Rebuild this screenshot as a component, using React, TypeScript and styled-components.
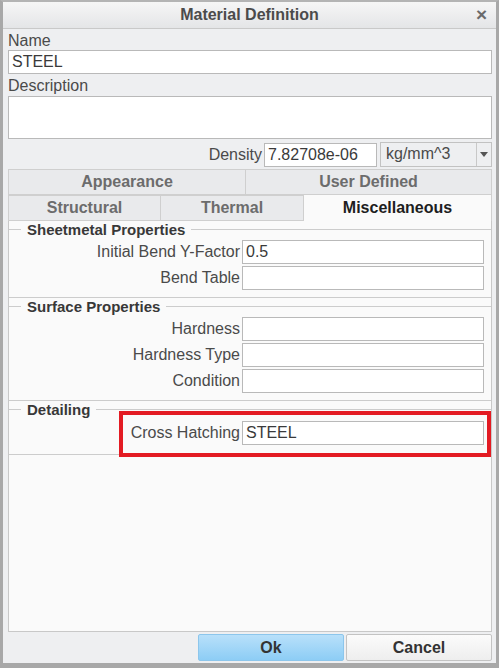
import React from "react"
import styled, { createGlobalStyle } from "styled-components"

const Global = createGlobalStyle`
  html, body { margin: 0; padding: 0; background: #ffffff; }
  body { font-family: "Liberation Sans", Arial, sans-serif; }
`

function Field({ label, value }: { label: string; value?: string }) {
  return (
    <FieldRow>
      <FieldLabel>{label}</FieldLabel>
      <Input>{value}</Input>
    </FieldRow>
  )
}

function App() {
  return (
    <Window>
      <Global />
      <TitleBar>
        <Title>Material Definition</Title>
        <Close>×</Close>
      </TitleBar>
      <Body>
        <Label>Name</Label>
        <Input $block>STEEL</Input>
        <Label>Description</Label>
        <TextArea />
        <DensityRow>
          <DensityLabel>Density</DensityLabel>
          <Input $width={113}>7.82708e-06</Input>
          <Select>
            <SelectText>kg/mm^3</SelectText>
            <SelectArrow>
              <svg width="8" height="5" viewBox="0 0 8 5">
                <path d="M0 0 L8 0 L4 5 Z" fill="#555" />
              </svg>
            </SelectArrow>
          </Select>
        </DensityRow>
        <Tabs>
          <TabRow>
            <Tab $w={238}>Appearance</Tab>
            <Tab $grow>User Defined</Tab>
          </TabRow>
          <TabRow>
            <Tab $w={153}>Structural</Tab>
            <Tab $w={144}>Thermal</Tab>
            <Tab $grow $active>Miscellaneous</Tab>
          </TabRow>
          <Panel>
            <Group>
              <GroupTitle>Sheetmetal Properties</GroupTitle>
              <Field label="Initial Bend Y-Factor" value="0.5" />
              <Field label="Bend Table" />
            </Group>
            <Group>
              <GroupTitle>Surface Properties</GroupTitle>
              <Field label="Hardness" />
              <Field label="Hardness Type" />
              <Field label="Condition" />
            </Group>
            <Group>
              <GroupTitle>Detailing</GroupTitle>
              <Highlight>
                <Field label="Cross Hatching" value="STEEL" />
              </Highlight>
            </Group>
          </Panel>
        </Tabs>
        <ButtonBar>
          <Button $primary>Ok</Button>
          <Button>Cancel</Button>
        </ButtonBar>
      </Body>
    </Window>
  )
}

export default App

const Window = styled.div`
  width: 499px;
  height: 668px;
  box-sizing: border-box;
  border: 3px solid #a8a8a8;
  border-top: 2px solid #b4b4b4;
  border-bottom: 5px solid #a8a8a8;
  background: #eeeff1;
  display: flex;
  flex-direction: column;
  color: #4a4a4a;
`
const TitleBar = styled.div`
  height: 26px;
  flex-shrink: 0;
  display: flex;
  align-items: center;
  justify-content: center;
  position: relative;
  background: linear-gradient(#f6f6f6, #e4e5e7);
  border-bottom: 1px solid #c9c9c9;
`
const Title = styled.div`
  font-size: 16px;
  font-weight: bold;
  color: #4b4b4b;
`
const Close = styled.div`
  position: absolute;
  right: 9px;
  top: 2px;
  font-size: 19px;
  font-weight: bold;
  color: #6a6a6a;
`
const Body = styled.div`
  flex: 1;
  display: flex;
  flex-direction: column;
  padding: 0 4px 0 5px;
`
const Label = styled.div`
  font-size: 16px;
  height: 21px;
  line-height: 24px;
  color: #4a4a4a;
`
const Input = styled.div<{ $width?: number; $block?: boolean }>`
  box-sizing: border-box;
  height: 24px;
  flex: ${(p) => (p.$width || p.$block ? "none" : "1")};
  ${(p) => (p.$width ? `width: ${p.$width}px;` : "")}
  background: #ffffff;
  border: 1px solid #b9b9b9;
  font-size: 16px;
  line-height: 22px;
  padding: 0 3px;
  color: #3a3a3a;
  white-space: nowrap;
`
const TextArea = styled.div`
  box-sizing: border-box;
  height: 43px;
  margin-top: 1px;
  background: #ffffff;
  border: 1px solid #b9b9b9;
`
const DensityRow = styled.div`
  display: flex;
  justify-content: flex-end;
  align-items: center;
  gap: 3px;
  margin-top: 3px;
  height: 25px;
`
const DensityLabel = styled.div`
  font-size: 16px;
  color: #4a4a4a;
  margin-right: -1px;
`
const Select = styled.div`
  box-sizing: border-box;
  width: 112px;
  height: 25px;
  display: flex;
  background: #eeeff1;
  border: 1px solid #c2c2c2;
`
const SelectText = styled.div`
  flex: 1;
  font-size: 16px;
  line-height: 22px;
  padding-left: 5px;
  color: #4a4a4a;
`
const SelectArrow = styled.div`
  width: 14px;
  border-left: 1px solid #c8c8c8;
  display: flex;
  align-items: center;
  justify-content: center;
`
const Tabs = styled.div`
  flex: 1;
  display: flex;
  flex-direction: column;
  margin-top: 2px;
`
const TabRow = styled.div`
  display: flex;
  height: 26px;
`
const Tab = styled.div<{ $w?: number; $grow?: boolean; $active?: boolean }>`
  box-sizing: border-box;
  ${(p) => (p.$grow ? "flex: 1;" : `width: ${p.$w}px;`)}
  display: flex;
  align-items: center;
  justify-content: center;
  font-size: 16px;
  font-weight: bold;
  color: ${(p) => (p.$active ? "#1e1e1e" : "#6c6c6c")};
  background: ${(p) => (p.$active ? "#fafafa" : "#e9eaec")};
  border: 1px solid #cfcfcf;
  border-bottom: ${(p) => (p.$active ? "none" : "1px solid #cfcfcf")};
  margin-left: -1px;
  margin-top: ${(p) => (p.$active ? "-1px" : "0")};
  &:first-child { margin-left: 0; }
`
const Panel = styled.div`
  flex: 1;
  background: #fafafa;
  border: 1px solid #c8c8c8;
  border-top: none;
  display: flex;
  flex-direction: column;
`
const Group = styled.div`
  position: relative;
  border-top: 1px solid #cccccc;
  border-bottom: 1px solid #cccccc;
  margin-top: 8px;
  padding: 10px 7px 7px 0;
  display: flex;
  flex-direction: column;
  gap: 2px;
`
const GroupTitle = styled.div`
  position: absolute;
  left: 12px;
  top: -9px;
  padding: 0 6px 0 6px;
  background: #fafafa;
  font-size: 15px;
  font-weight: bold;
  color: #383838;
  line-height: 17px;
`
const FieldRow = styled.div`
  display: flex;
  align-items: center;
  gap: 2px;
`
const FieldLabel = styled.div`
  width: 231px;
  text-align: right;
  font-size: 16px;
  color: #4a4a4a;
  white-space: nowrap;
`
const Highlight = styled.div`
  margin: -9px -7px -10px 110px;
  border: 4px solid #e31b23;
  padding: 6px 3px 8px 0;
  & ${FieldLabel} { width: 117px; }
`
const ButtonBar = styled.div`
  height: 31px;
  display: flex;
  justify-content: flex-end;
  align-items: center;
  gap: 2px;
`
const Button = styled.div<{ $primary?: boolean }>`
  box-sizing: border-box;
  width: 146px;
  height: 27px;
  display: flex;
  align-items: center;
  justify-content: center;
  font-size: 16px;
  font-weight: bold;
  color: #333333;
  border-radius: 2px;
  border: 1px solid ${(p) => (p.$primary ? "#8cc6ec" : "#c3c3c3")};
  background: ${(p) =>
    p.$primary ? "linear-gradient(#b8e0fa, #8dcdf5)" : "linear-gradient(#fbfbfb, #eeeeee)"};
`
